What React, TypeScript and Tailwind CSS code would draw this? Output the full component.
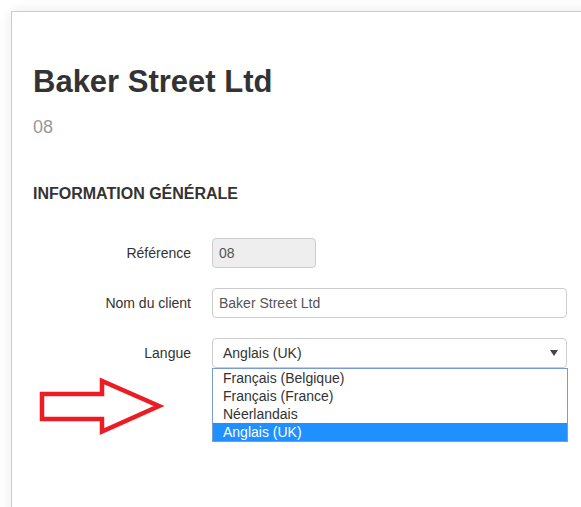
const LANGUES = ['Français (Belgique)', 'Français (France)', 'Néerlandais', 'Anglais (UK)'];

const Row = ({ label, children }: { label: string; children: React.ReactNode }) => (
  <div className="flex items-center h-[30px]">
    <label className="w-[158px] text-right text-[14px] leading-[30px] text-[#333]">{label}</label>
    <div className="ml-[21px] relative">{children}</div>
  </div>
);

const App = () => {
  const selected = 'Anglais (UK)';

  return (
    <div className="relative w-[581px] h-[507px] overflow-hidden bg-white font-['Liberation_Sans',Arial,sans-serif]">
      <div className="ml-[11px] mt-[11px] w-[600px] h-[520px] border-l border-t border-[#cccccc] bg-white shadow-[0_0_12px_rgba(0,0,0,0.09)] pl-[21px]">
        <h1 className="mt-[53px] text-[31px] leading-[34px] font-bold text-[#333]">Baker Street Ltd</h1>
        <div className="mt-[18px] text-[18px] leading-[20px] text-[#999]">08</div>
        <h2 className="mt-[47px] text-[16px] leading-[20px] font-bold text-[#333]">INFORMATION GÉNÉRALE</h2>

        <div className="mt-[34px] flex flex-col gap-[20px]">
          <Row label="Référence">
            <input
              readOnly
              value="08"
              className="w-[104px] h-[30px] px-[6px] rounded-[4px] border border-[#ccc] bg-[#eee] text-[14px] text-[#555] outline-none"
            />
          </Row>
          <Row label="Nom du client">
            <input
              readOnly
              value="Baker Street Ltd"
              className="w-[355px] h-[30px] px-[6px] rounded-[4px] border border-[#ccc] bg-white text-[14px] text-[#555] outline-none"
            />
          </Row>
          <Row label="Langue">
            <div className="w-[355px] h-[30px] pl-[10px] pr-[8px] rounded-[4px] border border-[#ccc] bg-white flex items-center justify-between text-[14px] text-[#333]">
              <span>{selected}</span>
              <svg width="8" height="6" viewBox="0 0 8 6">
                <path d="M0 0h8L4 6z" fill="#444" />
              </svg>
            </div>
            <ul className="absolute left-0 top-[30px] w-[356px] border border-[#7a9bd1] bg-white text-[14px]">
              {LANGUES.map((l) => (
                <li
                  key={l}
                  className={
                    l === selected
                      ? 'h-[18px] leading-[18px] pl-[10px] bg-[#1e90ff] text-white'
                      : 'h-[18px] leading-[18px] pl-[10px] text-[#333]'
                  }
                >
                  {l}
                </li>
              ))}
            </ul>
          </Row>
        </div>
      </div>

      {/* annotation arrow */}
      <svg className="absolute left-[30px] top-[370px]" width="140" height="75" viewBox="0 0 140 75">
        <polygon
          points="12,24 72,24 72,11 129,36 72,61.5 72,49 12,49"
          fill="none"
          stroke="#ed1c24"
          strokeWidth="4.5"
          strokeLinejoin="miter"
        />
      </svg>
    </div>
  );
};

export default App;
